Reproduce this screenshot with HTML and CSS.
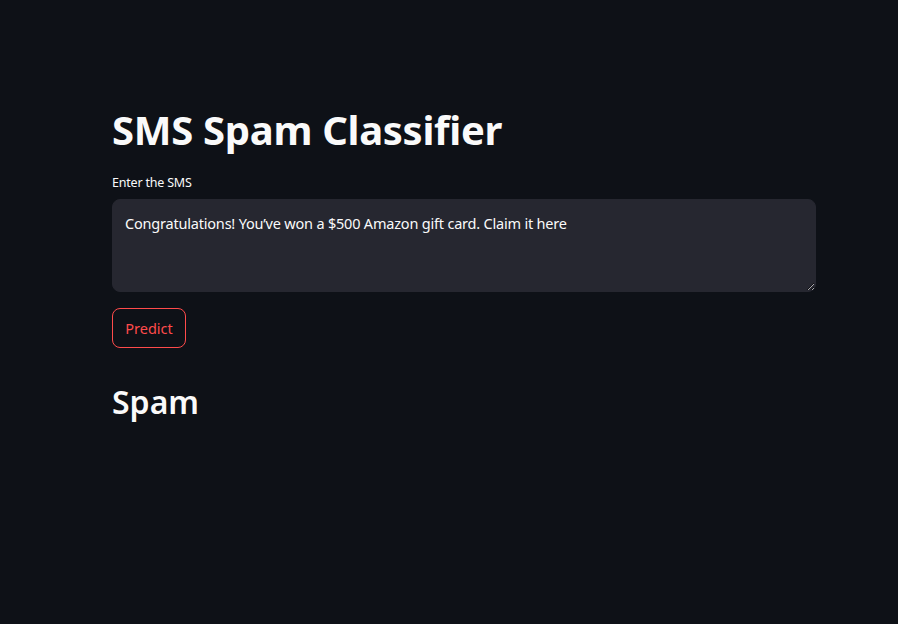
FILE: index.html
```html
<!DOCTYPE html>
<html>
<head>
<meta charset="utf-8">
<link rel="stylesheet" href="styles.css">
</head>
<body>
<main class="block">
  <h1 class="title">SMS Spam Classifier</h1>
  <div class="field">
    <label class="label" for="sms">Enter the SMS</label>
    <textarea id="sms" class="area">Congratulations! You’ve won a $500 Amazon gift card. Claim it here</textarea>
  </div>
  <button class="btn">Predict</button>
  <h2 class="result">Spam</h2>
</main>
</body>
</html>
```
FILE: styles.css
```css
html, body {
  margin: 0;
  padding: 0;
  background: #0e1117;
  color: #fafafa;
  font-family: "Noto Sans", "Open Sans", sans-serif;
  height: 100%;
}
.block {
  width: 704px;
  margin: 0 0 0 112px;
  padding-top: 100px;
  display: flex;
  flex-direction: column;
  align-items: flex-start;
}
.title {
  margin: 0;
  font-size: 40px;
  font-weight: 700;
  line-height: 60px;
  letter-spacing: -0.3px;
}
.field {
  width: 100%;
  display: flex;
  flex-direction: column;
  margin-top: 14px;
}
.label {
  font-size: 12.5px;
  line-height: 18px;
  margin-bottom: 7px;
  letter-spacing: -0.2px;
}
.area {
  box-sizing: border-box;
  width: 100%;
  height: 93px;
  background: #262730;
  border: 1px solid #262730;
  border-radius: 8px;
  color: #fafafa;
  font-family: inherit;
  font-size: 14.5px;
  line-height: 21px;
  padding: 13px 12px;
  letter-spacing: -0.2px;
  resize: vertical;
  outline: none;
}
.btn {
  margin-top: 16px;
  box-sizing: border-box;
  width: 74px;
  height: 40px;
  background: #0e1117;
  border: 1px solid #ff4b4b;
  border-radius: 8px;
  color: #ff4b4b;
  font-family: inherit;
  font-size: 14.5px;
  padding: 0;
}
.result {
  margin: 30px 0 0 0;
  font-size: 32px;
  font-weight: 600;
  line-height: 48px;
}
```
